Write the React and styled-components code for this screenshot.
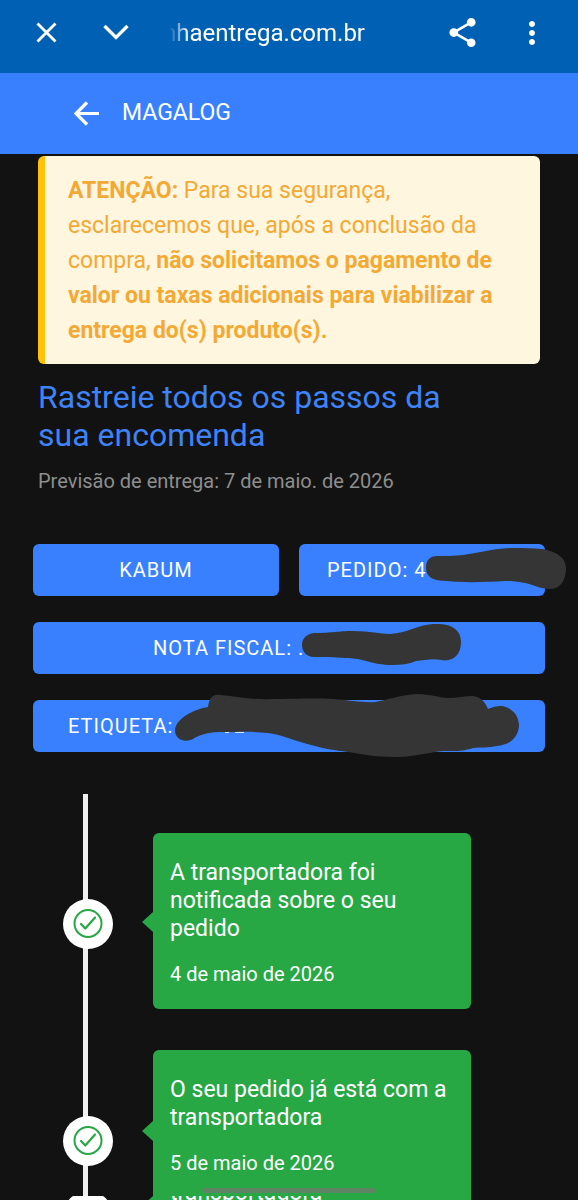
import React from 'react';
import styled, { createGlobalStyle } from 'styled-components';
import { MdShare, MdMoreVert } from 'react-icons/md';

const GlobalStyle = createGlobalStyle`
  * {
    box-sizing: border-box;
  }
  body {
    margin: 0;
    background: #121212;
    color: #fff;
    font-family: Roboto, 'Liberation Sans', sans-serif;
  }
`

const IconButton = styled.button`
  display: flex;
  padding: 0;
  border: none;
  background: none;
  color: #fff;
`

const BrowserBar = styled.header`
  display: flex;
  align-items: center;
  height: 73px;
  padding: 0 28px 8px;
  background: #0060b3;
`

const BarActions = styled.div`
  display: flex;
  gap: ${props => props.$gap}px;
`

const Url = styled.div`
  flex: 1;
  display: flex;
  justify-content: flex-end;
  margin: 0 80px 0 34px;
  overflow: hidden;
  font-size: 24px;
  line-height: 36px;
  white-space: nowrap;
  mask-image: linear-gradient(to right, transparent, #000 20px);
`

const AppBar = styled.nav`
  display: flex;
  align-items: center;
  gap: 18px;
  height: 81px;
  padding: 0 70px 2px;
  background: #3880ff;
`

const AppTitle = styled.span`
  font-size: 23px;
  line-height: 32px;
`

const Content = styled.main`
  padding: 2px 33px 0;
`

const Alert = styled.div`
  margin: 0 5px;
  padding: 17px 23px 16px;
  border-left: 7px solid #ffc107;
  border-radius: 6px;
  background: #fff6df;
  color: #f3a935;
  font-size: 23px;
  line-height: 35px;
`

const Intro = styled.section`
  padding: 14px 90px 0 5px;
`

const Heading = styled.h1`
  margin: 0;
  color: #3f83f8;
  font-size: 32px;
  font-weight: 400;
  line-height: 38px;
`

const Forecast = styled.p`
  margin: 13px 0 0;
  color: #8e8e8e;
  font-size: 20px;
  line-height: 28px;
`

const Tags = styled.div`
  display: grid;
  grid-template-columns: 1fr 1fr;
  gap: 26px 20px;
  margin-top: 49px;
`

const Tag = styled.button`
  position: relative;
  grid-column: ${props => props.$wide ? '1 / -1' : 'auto'};
  height: 52px;
  padding: 0 0 0 ${props => props.$indent || 0}px;
  border: none;
  border-radius: 6px;
  background: #3880ff;
  color: #fff;
  font-family: inherit;
  font-size: 20px;
  letter-spacing: 1px;
  text-align: ${props => props.$indent ? 'left' : 'center'};
`

const Scribble = styled.svg`
  position: absolute;
  inset: 0;
  width: 100%;
  height: 100%;
  overflow: visible;
  fill: #343534;
`

const Timeline = styled.ol`
  display: flex;
  flex-direction: column;
  gap: 41px;
  margin: 42px 0 0 50px;
  padding: 39px 0 0;
  border-left: 5px solid #f0eeee;
  list-style: none;
`

const Step = styled.li`
  display: flex;
  align-items: flex-start;
  gap: 40px;
  margin-left: -25px;
`

const Dot = styled.div`
  display: flex;
  flex: none;
  align-items: center;
  justify-content: center;
  width: 50px;
  height: 50px;
  margin-top: 66px;
  border-radius: 50%;
  background: #fff;
`

const StepCard = styled.article`
  position: relative;
  width: 318px;
  min-height: 160px;
  padding: 26px 17px 21px;
  border-radius: 6px;
  background: #28a745;
  &::before {
    content: '';
    position: absolute;
    top: 50%;
    right: 100%;
    margin-top: -9px;
    border: solid transparent;
    border-width: 10px 11px 10px 0;
    border-right-color: #28a745;
  }
`

const StepTitle = styled.h2`
  margin: 0 0 17px;
  font-size: 23px;
  font-weight: 400;
  line-height: 28px;
`

const StepDate = styled.p`
  margin: 0;
  font-size: 20px;
  line-height: 28px;
`

const BottomEdge = styled.div`
  position: fixed;
  right: 0;
  bottom: 0;
  left: 0;
  height: 4px;
  padding-left: 63px;
  overflow: hidden;
`

const EdgeRow = styled.div`
  margin: -71px 0 0 25px;
`

const HomeHandle = styled.div`
  position: fixed;
  bottom: 7px;
  left: 50%;
  width: 30%;
  height: 5px;
  border-radius: 3px;
  background: rgba(112, 120, 112, 0.75);
  transform: translateX(-50%);
`

const steps = [
	{ title: 'A transportadora foi notificada sobre o seu pedido', date: '4 de maio de 2026' },
	{ title: 'O seu pedido já está com a transportadora', date: '5 de maio de 2026' }
]

function CheckIcon() {
	return (
		<svg width="30" height="30" viewBox="0 0 30 30" fill="none" stroke="#28a745" strokeLinecap="round"
		     strokeLinejoin="round">
			<circle cx="15" cy="14.5" r="13.5" strokeWidth="2"/>
			<path d="M8 15 L12.3 19.5 L22 8.5" strokeWidth="2.2"/>
		</svg>
	)
}

function TimelineStep({ step, as }) {
	return (
		<Step as={as}>
			<Dot><CheckIcon/></Dot>
			<StepCard>
				<StepTitle>{step.title}</StepTitle>
				<StepDate>{step.date}</StepDate>
			</StepCard>
		</Step>
	)
}

function App() {
	return (
		<>
			<GlobalStyle/>
			<BrowserBar>
				<BarActions $gap={31}>
					<IconButton aria-label="Fechar">
						<svg width="38" height="38" viewBox="0 0 38 38" fill="none" stroke="#fff" strokeWidth="2.8">
							<path d="M9.5 9.5 L27.5 27.5 M27.5 9.5 L9.5 27.5"/>
						</svg>
					</IconButton>
					<IconButton aria-label="Minimizar">
						<svg width="38" height="38" viewBox="0 0 38 38" fill="none" stroke="#fff" strokeWidth="3.3">
							<path d="M7.5 12 L19 23.5 L30.5 12"/>
						</svg>
					</IconButton>
				</BarActions>
				<Url>nhaentrega.com.br</Url>
				<BarActions $gap={34}>
					<IconButton aria-label="Compartilhar"><MdShare size={35}/></IconButton>
					<IconButton aria-label="Mais opções"><MdMoreVert size={36}/></IconButton>
				</BarActions>
			</BrowserBar>
			<AppBar>
				<IconButton aria-label="Voltar">
					<svg width="34" height="34" viewBox="0 0 34 34" fill="none" stroke="#fff" strokeWidth="3.2">
						<path d="M29 17.5 H6 M17 6.5 L6 17.5 L17 28.5"/>
					</svg>
				</IconButton>
				<AppTitle>MAGALOG</AppTitle>
			</AppBar>
			<Content>
				<Alert role="alert">
					<strong>ATENÇÃO:</strong> Para sua segurança, esclarecemos que, após a conclusão da
					compra, <strong>não solicitamos o pagamento de valor ou taxas adicionais para viabilizar a
					entrega do(s) produto(s).</strong>
				</Alert>
				<Intro>
					<Heading>Rastreie todos os passos da sua encomenda</Heading>
					<Forecast>Previsão de entrega: 7 de maio. de 2026</Forecast>
				</Intro>
				<Tags>
					<Tag>KABUM</Tag>
					<Tag $indent={28}>
						PEDIDO: 4
						<Scribble viewBox="0 0 246 52">
							<path d="M127 24 C127 16 131 12 138 12 C150 12 158 12 170 10 C188 7 201 4 214 4 C224 4 234 4 243 5 C257 7 267 14 267 24 C267 37 261 45 251 45 C242 45 235 41 226 39 C216 37 213 37 206 37 C188 38 165 39 148 37 C134 37 127 33 127 24 Z"/>
						</Scribble>
					</Tag>
					<Tag $wide $indent={120}>
						NOTA FISCAL: .
						<Scribble viewBox="0 0 512 52">
							<path d="M269 23 C269 16 274 12 281 11 C300 11 304 9 320 9 C337 9 347 12 357 12 C374 11 385 3 400 2 C416 1 428 6 428 20 C428 34 419 40 408 38 C401 36 391 38 383 39 C376 42 368 43 359 43 C339 43 331 36 312 36 C302 35 288 35 281 35 C274 35 269 30 269 23 Z"/>
						</Scribble>
					</Tag>
					<Tag $wide $indent={35}>
						ETIQUETA:
						<Scribble viewBox="0 0 512 52">
							<path d="M192 32.3 h4 M202 32.3 h9" stroke="#fff" strokeWidth="1"/>
							<path d="M142 30 C143 18 162 9 175 7 C176 -1 179 -6 187 -5 C207 -3 222 0 239 -1 C263 -1 280 -2 300 -1 C316 0 331 3 342 2 C356 0 365 -5 384 -6 C398 -6 407 -2 416 -2 C424 -2 431 -4 440 -4 C449 -3 453 4 455 9 C460 7 463 6 469 6 C480 8 486 16 486 26 C485 39 475 45 464 46 C455 48 448 47 440 48 C427 52 421 51 413 51 C398 51 386 57 362 57 C340 57 330 54 315 52 C301 50 293 49 282 46 C261 41 247 34 235 33 C219 31 206 32 186 32 C174 32 164 36 160 39 C152 43 142 40 142 30 Z"/>
						</Scribble>
					</Tag>
				</Tags>
				<Timeline>
					{steps.map((step, i) => <TimelineStep key={'Step+' + i} step={step}/>)}
				</Timeline>
			</Content>
			<BottomEdge aria-hidden="true">
				<EdgeRow>
					<TimelineStep as="div" step={steps[1]}/>
				</EdgeRow>
			</BottomEdge>
			<HomeHandle/>
		</>
	)
}

export default App;
